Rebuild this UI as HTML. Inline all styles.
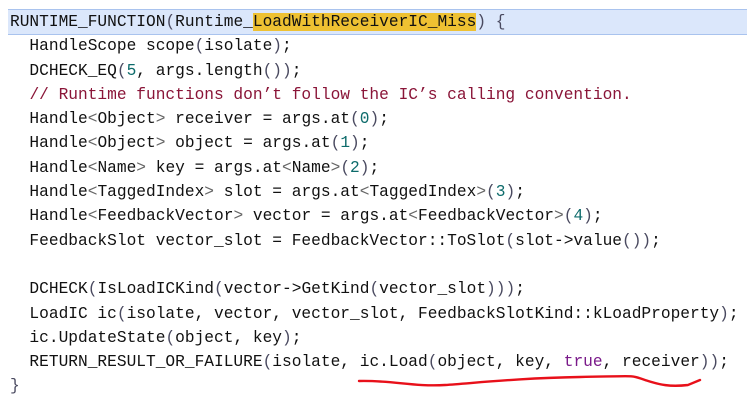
<!DOCTYPE html>
<html><head><meta charset="utf-8"><style>
html,body{margin:0;padding:0;background:#fff;width:747px;height:405px;overflow:hidden}
.band{position:absolute;left:8px;top:9px;width:739px;height:26px;background:#dbe7fb;border-top:1px solid #a9c3ee;border-bottom:1px solid #a9c3ee;box-sizing:border-box}
pre{position:absolute;left:10px;top:10px;margin:0;font-family:"Liberation Mono",monospace;font-size:16.2px;line-height:24.3px;color:#111}
.hl{background:#eec132}
.c{color:#8a1538}
.n{color:#0d6b6b}
.k{color:#7a1a8a}
.p{color:#4a4a60}
.g{color:#666}
svg{position:absolute;left:0;top:0}
</style></head><body>
<div class="band"></div>
<pre>RUNTIME_FUNCTION<span class="p">(</span>Runtime_<span class="hl">LoadWithReceiverIC_Miss</span><span class="p">)</span> <span class="p">{</span>
  HandleScope scope<span class="p">(</span>isolate<span class="p">)</span>;
  DCHECK_EQ<span class="p">(</span><span class="n">5</span>, args.length<span class="p">())</span>;
  <span class="c">// Runtime functions don’t follow the IC’s calling convention.</span>
  Handle<span class="g">&lt;</span>Object<span class="g">&gt;</span> receiver = args.at<span class="p">(</span><span class="n">0</span><span class="p">)</span>;
  Handle<span class="g">&lt;</span>Object<span class="g">&gt;</span> object = args.at<span class="p">(</span><span class="n">1</span><span class="p">)</span>;
  Handle<span class="g">&lt;</span>Name<span class="g">&gt;</span> key = args.at<span class="g">&lt;</span>Name<span class="g">&gt;</span><span class="p">(</span><span class="n">2</span><span class="p">)</span>;
  Handle<span class="g">&lt;</span>TaggedIndex<span class="g">&gt;</span> slot = args.at<span class="g">&lt;</span>TaggedIndex<span class="g">&gt;</span><span class="p">(</span><span class="n">3</span><span class="p">)</span>;
  Handle<span class="g">&lt;</span>FeedbackVector<span class="g">&gt;</span> vector = args.at<span class="g">&lt;</span>FeedbackVector<span class="g">&gt;</span><span class="p">(</span><span class="n">4</span><span class="p">)</span>;
  FeedbackSlot vector_slot = FeedbackVector::ToSlot<span class="p">(</span>slot-&gt;value<span class="p">())</span>;

  DCHECK<span class="p">(</span>IsLoadICKind<span class="p">(</span>vector-&gt;GetKind<span class="p">(</span>vector_slot<span class="p">)))</span>;
  LoadIC ic<span class="p">(</span>isolate, vector, vector_slot, FeedbackSlotKind::kLoadProperty<span class="p">)</span>;
  ic.UpdateState<span class="p">(</span>object, key<span class="p">)</span>;
  RETURN_RESULT_OR_FAILURE<span class="p">(</span>isolate, ic.Load<span class="p">(</span>object, key, <span class="k">true</span>, receiver<span class="p">))</span>;
<span class="p">}</span></pre>
<svg width="747" height="405"><path d="M359 381 C 390 380, 415 387, 445 385 S 520 378, 580 377 S 630 375, 645 380 S 670 387, 688 385 L 700 380" fill="none" stroke="#e8101a" stroke-width="2.4" stroke-linecap="round"/></svg>
</body></html>
